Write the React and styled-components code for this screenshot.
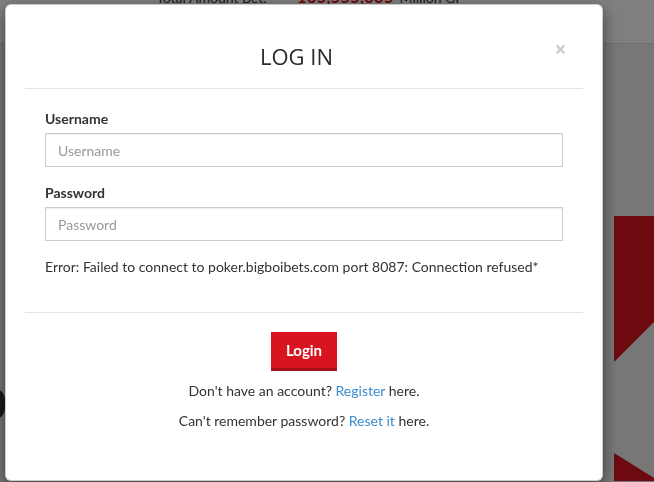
import React from 'react'
import styled, { createGlobalStyle } from 'styled-components'

const GlobalStyle = createGlobalStyle`
  html, body {
    margin: 0;
    padding: 0;
    font-family: Lato, "Open Sans", sans-serif;
    font-size: 14px;
    color: #333;
    overflow: hidden;
  }
  * { box-sizing: border-box; }
`

const Page = styled.div`
  min-height: 100vh;
  background: #eeeeee;
`

const TopBar = styled.header`
  height: 44px;
  background: #fff;
  border-bottom: 1px solid #dcdcdc;
  text-align: center;
  overflow: hidden;
`

const BetTotal = styled.div`
  margin-top: -15px;
  padding-right: 34px;
  font-size: 14px;
  line-height: 24px;
  color: #333;
  white-space: nowrap;
`

const BetAmount = styled.span`
  color: #d8151f;
  font-size: 17px;
  font-weight: 700;
  margin: 0 6px 0 30px;
`

const Main = styled.main`
  display: flex;
  justify-content: space-between;
  align-items: flex-start;
`

const Chip = styled.div`
  width: 34px;
  height: 32px;
  margin: 344px 0 0 -29px;
  border-radius: 12px;
  background: #333;
`

const Stripe = styled.svg`
  display: block;
  margin-top: 172px;
`

const Overlay = styled.div`
  position: fixed;
  inset: 0;
  background: rgba(0, 0, 0, 0.5);
  padding: 4px 0 0 5px;
`

const Dialog = styled.div`
  width: 598px;
  height: 477px;
  background: #fff;
  border: 1px solid rgba(0, 0, 0, 0.2);
  border-radius: 6px;
  box-shadow: 0 5px 15px rgba(0, 0, 0, 0.5);
  padding: 0 19px;
  display: flex;
  flex-direction: column;
`

const Header = styled.div`
  display: flex;
  align-items: flex-start;
  padding: 39px 15px 20px;
  border-bottom: 1px solid #e5e5e5;
`

const Title = styled.h4`
  flex: 1;
  margin: 0;
  text-align: center;
  font-family: "Open Sans", sans-serif;
  font-size: 22px;
  line-height: 24px;
  font-weight: 400;
  color: #2b2b2b;
`

const Close = styled.button`
  width: 15px;
  padding: 0;
  margin-top: -5px;
  border: 0;
  background: transparent;
  font-family: "Open Sans", sans-serif;
  font-size: 21px;
  line-height: 21px;
  font-weight: 700;
  color: #000;
  opacity: 0.2;
  cursor: pointer;
`

const Body = styled.form`
  padding: 20px 20px 35px;
  border-bottom: 1px solid #e5e5e5;
`

const Field = styled.div`
  & + & { margin-top: 16px; }
`

const Label = styled.label`
  display: block;
  margin-bottom: 4px;
  font-weight: 700;
  line-height: 20px;
`

const Input = styled.input`
  display: block;
  width: 100%;
  height: 34px;
  padding: 6px 12px;
  border: 1px solid #ccc;
  border-radius: 0;
  box-shadow: inset 0 1px 1px rgba(0, 0, 0, 0.075);
  font-family: inherit;
  font-size: 14px;
  color: #555;
  outline: none;

  &::placeholder { color: #999; }
`

const ErrorText = styled.p`
  margin: 16px 0 0;
  line-height: 20px;
`

const Footer = styled.div`
  padding-top: 19px;
  display: flex;
  flex-direction: column;
  align-items: center;
`

const LoginButton = styled.button`
  height: 39px;
  padding: 0 15px;
  border: 0;
  border-bottom: 3px solid #a3121a;
  border-radius: 0;
  background: #d8151f;
  color: #fff;
  font-family: inherit;
  font-size: 15px;
  font-weight: 700;
  cursor: pointer;
`

const Hint = styled.p`
  margin: 10px 0 0;
  line-height: 20px;
`

const Link = styled.a`
  color: #3b8bcf;
  text-decoration: none;
`

export default function App() {
  return (
    <>
      <GlobalStyle />
      <Page>
        <TopBar>
          <BetTotal>
            Total Amount Bet:<BetAmount>105,555,005</BetAmount>Million GP
          </BetTotal>
        </TopBar>
        <Main>
          <Chip />
          <Stripe width="40" height="265" viewBox="0 0 40 265">
            <polygon points="0,0 40,0 40,106 0,146" fill="#d8151f" />
            <polygon points="0,237 40,262 40,265 0,265" fill="#d8151f" />
          </Stripe>
        </Main>
      </Page>

      <Overlay>
        <Dialog>
          <Header>
            <Title>LOG IN</Title>
            <Close type="button" aria-label="Close">×</Close>
          </Header>
          <Body onSubmit={(e) => e.preventDefault()}>
            <Field>
              <Label htmlFor="username">Username</Label>
              <Input id="username" placeholder="Username" />
            </Field>
            <Field>
              <Label htmlFor="password">Password</Label>
              <Input id="password" type="password" placeholder="Password" />
            </Field>
            <ErrorText>
              Error: Failed to connect to poker.bigboibets.com port 8087: Connection refused*
            </ErrorText>
          </Body>
          <Footer>
            <LoginButton type="button">Login</LoginButton>
            <Hint>
              Don't have an account? <Link href="#">Register</Link> here.
            </Hint>
            <Hint>
              Can't remember password? <Link href="#">Reset it</Link> here.
            </Hint>
          </Footer>
        </Dialog>
      </Overlay>
    </>
  )
}
